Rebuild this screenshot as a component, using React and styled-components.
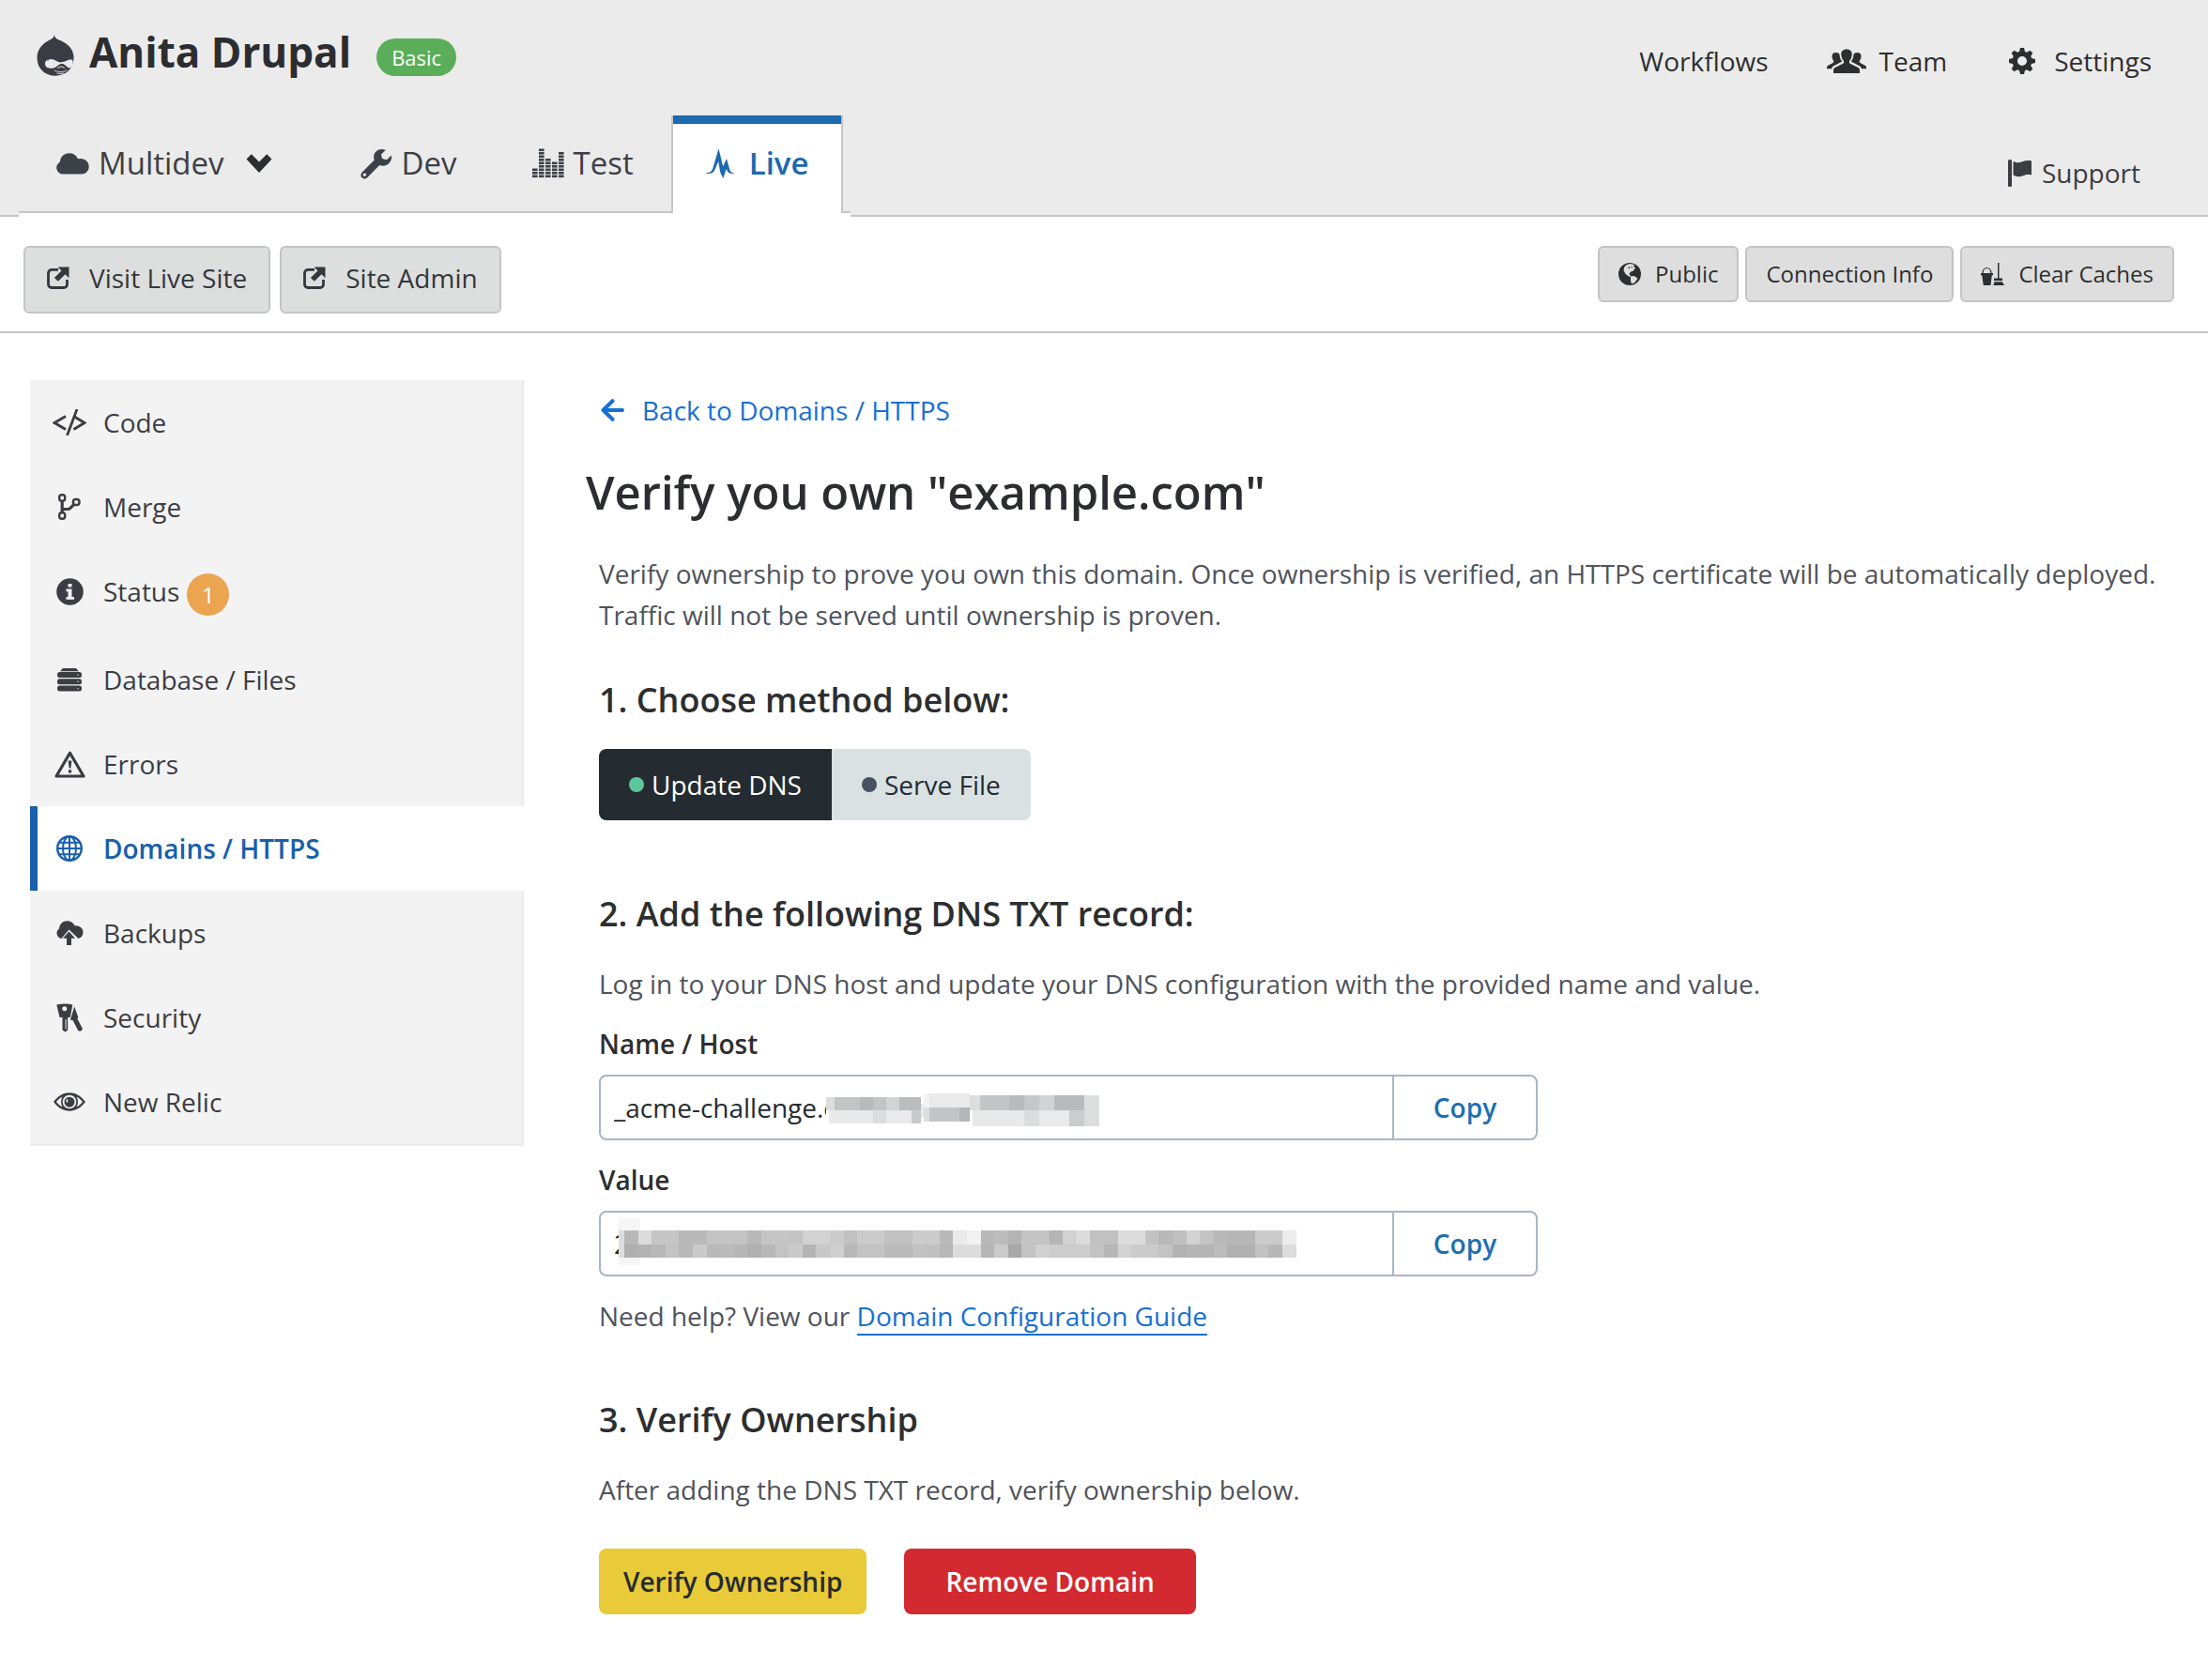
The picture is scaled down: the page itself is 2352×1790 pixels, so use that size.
import React, { useState } from "react";
import styled, { createGlobalStyle, css } from "styled-components";

const GlobalStyle = createGlobalStyle`
  *, *::before, *::after { box-sizing: border-box; }
  body {
    margin: 0;
    background: #fff;
    color: #2d2e2f;
    font-family: "Open Sans", "Noto Sans", sans-serif;
    font-size: 28px;
    line-height: 44px;
  }
  button, input { font: inherit; color: inherit; margin: 0; }
  button { cursor: pointer; }
  svg { display: block; flex: none; }
  h1, h2, p { margin: 0; }
`;

/* ---------- Icons ---------- */

const Svg = ({ w, h, children, ...rest }) => (
  <svg width={w} height={h} viewBox={`0 0 ${w} ${h}`} fill="currentColor" aria-hidden="true" {...rest}>
    {children}
  </svg>
);

const DrupalIcon = () => (
  <Svg w={40} h={44}>
    <path d="M18.700 0c.6 2.600 1.700 4 4.300 5.200C32 8.500 39.500 14 39.500 24.500 39.500 36 31 43.700 20 43.700S.5 36 .5 24.700C.5 15 7 9 14 5.500 17.500 3.800 18.500 2.500 18.700 0z" />
    <path fill="#ebebeb" d="M9 31c0-3.400 2.800-5.200 6.300-5 4 .2 6.200 2.800 9.700 3.400 3.600-.4 6.500-1.600 9.800-3 2.500-.8 3.900.4 3.900 3 0 3-1.400 5.600-3.400 6-2.300.3-4.300-3.100-7.300-4.300-3-.6-4.600 1-7.200 3.100-2.600 1.700-5.300 1.900-7.600 1.400C10.500 35 9 33.500 9 31z" />
    <path fill="none" stroke="#b4b6b8" strokeWidth="1.300" strokeLinecap="round" d="M22.500 35.500c2-1.700 5-1.800 7-.1M19.500 38.200c3 1.800 9 2 12.500-.2M22 41.200c2.500.6 4.500.5 6.500 0" />
    <path fill="#1e78c8" d="M10.500 27.500l2.200-1.800 1.800.3-2.600 1.800zM34.500 26.500l3.200-1.200.5 1.200zM38 23l1.500-1v2z" />
  </Svg>
);

const CloudIcon = () => (
  <Svg w={35} h={23}>
    <path d="M7 22.500a6.800 6.800 0 0 1-4.300-12c.5-.4 1.300-.7 1.300-1.400C4.500 3.600 9 .3 14 .3c3.800 0 7 2 8.500 5.300.3.600.8.700 1.600.6 6-.9 10.600 3 10.600 8.300 0 4.600-3.400 8-8 8z" />
  </Svg>
);

const ChevronIcon = () => (
  <Svg w={28} h={20}>
    <path d="M14 20L.5 5.500 5.800.3 14 8.600 22.200.3l5.300 5.200z" />
  </Svg>
);

const WrenchIcon = () => (
  <Svg w={34} h={33}>
    <path d="M33 7.500l-5 4.700-5-1.300-1-4.400L26.800 2C23 .2 18.500.8 16 4c-2 2.600-2.300 5.300-1.300 8.500L2 25.200c-2.200 2.300-2 4.600-.5 6.100 1.500 1.600 4.200 1.600 6.200-.6L20.300 18c3.700 1.200 7.300.8 10-1.900 2.500-2.500 3.200-5.500 2.700-8.600zM5.700 29.300a1.700 1.700 0 1 1-2.400-2.400 1.700 1.700 0 0 1 2.400 2.400z" />
  </Svg>
);

const BAR_LEVELS = [3, 9, 6, 5, 8];
const BarsIcon = () => (
  <Svg w={34} h={32}>
    {BAR_LEVELS.map((count, col) =>
      Array.from({ length: count }, (_, n) => (
        <rect key={`${col}-${n}`} x={col * 7} y={32 - 3.5 * (n + 1)} width="5.600" height="2.600" />
      ))
    )}
  </Svg>
);

const PulseIcon = () => (
  <Svg w={33} h={32}>
    <path d="M0 26.500c5-.3 7-1.500 8.300-5L14.500.3l4.700 19L23 11l3.500 12.500c.8 2 2.500 2.800 6 3-4.700 1-7.300.4-8.700-2.300l-1-2.300L19.300 32l-3.100-6.500-2-11.500-4 9.500C8.300 27 5 27.800 0 26.500z" />
  </Svg>
);

const TeamIcon = () => (
  <Svg w={42} h={26} viewBox="0 0 42 30" preserveAspectRatio="none">
    <path d="M21 .5c3.800 0 6 2.500 5.700 7-.2 3-1.200 5.500-2.400 7-.6.8-.5 3.200.5 3.800l8 4.400c1.500.9 2.200 2 2.200 3.800v3.500H7v-3.500c0-1.800.7-2.900 2.200-3.800l8-4.400c1-.6 1.100-3 .5-3.800-1.200-1.500-2.200-4-2.400-7C15 3 17.200.5 21 .5z" />
    <path d="M9.500 4.500c2.300 0 3.500.9 4 2.500.2 3.800 1 6.500 2.800 8.700l-8.600 5C6 21.800 5.300 22.500 5.200 24.500H0V23c0-1.500.5-2.200 1.800-2.900l4.700-2.800c1-.7 1-2.200.5-3-1-1.300-1.500-3-1.500-5.300 0-3 1.400-4.500 4-4.500zM32.500 4.500c-2.300 0-3.500.9-4 2.500-.2 3.800-1 6.500-2.800 8.700l8.600 5c1.700 1.100 2.400 1.800 2.500 3.800H42V23c0-1.500-.5-2.200-1.800-2.900l-4.700-2.800c-1-.7-1-2.200-.5-3 1-1.300 1.500-3 1.500-5.300 0-3-1.400-4.500-4-4.500z" />
  </Svg>
);

const GearIcon = () => (
  <Svg w={28} h={28}>
    <g>
      {[0, 45, 90, 135, 180, 225, 270, 315].map((angle) => (
        <path key={angle} d="M10.800 5L12 0h4l1.200 5z" transform={`rotate(${angle} 14 14)`} />
      ))}
    </g>
    <path fillRule="evenodd" d="M14 3.500a10.500 10.500 0 1 1 0 21 10.500 10.500 0 0 1 0-21zm0 5.500a5 5 0 1 0 0 10 5 5 0 0 0 0-10z" />
  </Svg>
);

const FlagIcon = () => (
  <Svg w={26} h={29}>
    <rect x="0" y="0" width="4" height="29" rx="1.500" />
    <path d="M5.500 2c5.500 2.500 8 .8 11-.2 3-1 6-.8 8.500-.3v15c-3.500-1-6-.4-9 .8-3.500 1.200-7 1.300-10.500-.8z" />
  </Svg>
);

const ExternalIcon = () => (
  <Svg w={24} h={24}>
    <path fill="none" stroke="currentColor" strokeWidth="2.800" d="M12 3.400H5A3.500 3.500 0 0 0 1.500 7v12A3.500 3.500 0 0 0 5 22.500h13a3.500 3.500 0 0 0 3.500-3.500v-5" />
    <path d="M11.500.5h12v11.700l-4-3.900-7.600 7.500-4-3.900 7.600-7.400z" />
  </Svg>
);

const EarthIcon = () => (
  <Svg w={24} h={24}>
    <circle cx="12" cy="12" r="12" />
    <path fill="#dedede" d="M8 2.500l4-1.500 5 1-1 2 2 1-2 3.500-3.500 1.500-1 2.500 2 2-1.500.5-4-2.500-2.500-4 .5-3.500zM13 14.500l3.500-.5 4 2.500-3 4.500-3.500 1.500-1-3.500z" />
    <path d="M10.500 4.500h1.500v1.500h-1.500zM13.500 4h1.200v1.200h-1.200z" />
  </Svg>
);

const CleanIcon = () => (
  <Svg w={25} h={24}>
    <path fill="none" stroke="currentColor" strokeWidth="1.200" d="M2 11.500C2 3.500 11 3.500 11 11.500" />
    <path d="M0 11h13v2.200h-1.200L10.500 24H2.800L1.200 13.200H0zM18 0h1.500v16.500H23V19h-9v-2.500h4zM14.500 20.200h8.300L25 24H13.300z" />
  </Svg>
);

const ArrowLeftIcon = () => (
  <Svg w={25} h={24} fill="none" stroke="currentColor" strokeWidth="4" strokeLinecap="round" strokeLinejoin="round">
    <path d="M12.500 2.200L2.500 12l10 9.800M3.500 12H23" />
  </Svg>
);

const CodeIcon = () => (
  <Svg w={36} h={28} fill="none" stroke="currentColor" strokeWidth="2.800">
    <path d="M14 7.500L2 14.500l12 7M22.500 7.500L34 14.500l-11.500 7M26 0L15.500 28" />
  </Svg>
);

const MergeIcon = () => (
  <Svg w={24} h={28} fill="none" stroke="currentColor" strokeWidth="2.400">
    <rect x="1.200" y="1.200" width="6" height="6.500" rx="2.500" />
    <rect x="1.200" y="20.300" width="6" height="6.500" rx="2.500" />
    <rect x="16" y="6" width="6.500" height="6" rx="2.500" />
    <path strokeWidth="3.200" d="M4.200 8v12M4.200 16.500h6.500c2.500 0 3-3 6.300-4.800" />
  </Svg>
);

const InfoIcon = () => (
  <Svg w={29} h={29}>
    <circle cx="14.500" cy="14.500" r="14.300" />
    <path fill="#f3f3f3" d="M12.500 6h4v3.500h-4zM10.500 11.500h6v8.500h2.500v2.700h-8.500V20h2v-5.700h-2z" />
  </Svg>
);

const DatabaseIcon = () => (
  <Svg w={26} h={26}>
    <path d="M6 1h14l3 3.300H3z" />
    <rect y="5" width="26" height="6" rx="2.500" />
    <rect y="12.300" width="26" height="6" rx="2.500" />
    <rect y="19.600" width="26" height="6" rx="2.500" />
    <path fill="#f3f3f3" d="M21.500 7.300h1v1.400h-1zM21.500 14.600h1V16h-1zM21.500 21.900h1v1.400h-1z" />
  </Svg>
);

const WarningIcon = () => (
  <Svg w={33} h={29}>
    <path fill="none" stroke="currentColor" strokeWidth="3.200" strokeLinejoin="round" d="M16.500 2.300L31 27H2z" />
    <path d="M14.600 10.500h3.800l-1 8h-1.800zM14.900 20.300h3.200v3.200h-3.200z" />
  </Svg>
);

const GlobeIcon = () => (
  <Svg w={28} h={28} fill="none" stroke="currentColor" strokeWidth="2">
    <circle cx="14" cy="14" r="12.800" strokeWidth="2.400" />
    <ellipse cx="14" cy="14" rx="7" ry="12.800" />
    <path d="M14 1v26M1 14h26M3 7.800h22M3 20.200h22" />
  </Svg>
);

const BackupIcon = () => (
  <Svg w={30} h={26}>
    <path d="M6.500 19A5.800 5.800 0 0 1 4 8.500C4.300 3.500 8 .3 12.500.3c3.500 0 6.500 1.800 8 5 5-.5 9 2.500 9 7 0 3.500-2 6-5 6.700L14.500 9.500z" />
    <path d="M14.500 11.500l6.500 7.300h-4V26h-5v-7.200H8z" />
  </Svg>
);

const KeysIcon = () => (
  <Svg w={29} h={31}>
    <path fillRule="evenodd" d="M.3 1.500C6 .2 12 .2 17.300 1.500L14.800 15h-2.600v13.500L9.500 30.500 6.500 28.500V15H3.500zM8.800 3.200a2.500 2.500 0 1 0 0 5 2.500 2.500 0 0 0 0-5z" />
    <path d="M19.300 3.500l4 11.500-1 1.300 5.700 11-1.500 2.200h-3L17.500 18l-2.700-.2z" />
    <path fill="#f3f3f3" d="M9.600 17h1v10.500h-1z" />
  </Svg>
);

const EyeIcon = () => (
  <Svg w={34} h={20}>
    <path fillRule="evenodd" d="M0 10C5 3.500 10.500.3 17 .3S29 3.500 34 10C29 16.500 23.500 19.700 17 19.700S5 16.500 0 10zM9.500 4.500C6.500 6 4.700 7.800 3 10c1.700 2.200 3.500 4 6.500 5.500-2-3.500-2-7.500 0-11zM24.500 4.500c2 3.500 2 7.500 0 11 3-1.500 4.800-3.300 6.500-5.500-1.700-2.200-3.500-4-6.500-5.500zM17 2.700a7.300 7.300 0 1 0 0 14.600 7.300 7.300 0 0 0 0-14.600z" />
    <path d="M17 4.700a5.500 5.500 0 1 1 0 11 5.500 5.500 0 0 1 0-11z" />
    <path fill="#f3f3f3" d="M13.300 9.500c.2-1.500 1-2.500 2-2.800-.3 1.500-.3 2.500.3 3.800-1 .2-2 0-2.300-1z" />
  </Svg>
);

/* ---------- Header ---------- */

const Header = styled.header`
  display: flex;
  justify-content: space-between;
  background: #ebebeb;
  border-bottom: 2px solid #c4c4c4;
`;

const HeaderStart = styled.div`
  display: flex;
  flex-direction: column;
  padding-bottom: 2px;
`;

const Brand = styled.div`
  display: flex;
  align-items: flex-end;
  padding: 29px 39px 42px;
  color: #393c42;
`;

const SiteName = styled.h1`
  margin-left: 16px;
  color: #2c2d31;
  font-size: 44px;
  font-weight: 700;
  line-height: 52px;
`;

const PlanBadge = styled.span`
  margin-left: 27px;
  padding: 0 16px;
  border-radius: 20px;
  background: #5aae5a;
  color: #fff;
  font-size: 22px;
  line-height: 40px;
`;

const TabBar = styled.nav`
  display: flex;
  height: 104px;
  margin-left: 20px;
  padding-right: 8px;
  border-bottom: 2px solid #c6c6c6;
  box-shadow: 0 4px 0 #fff;
`;

const Tab = styled.a`
  display: flex;
  align-items: center;
  gap: 10px;
  padding: 0 40px;
  color: #3c4047;
  font-size: 33px;
  text-decoration: none;
  ${(p) => p.$menu && css`padding-right: 54px;`}
  ${(p) =>
    p.$active &&
    css`
      gap: 14px;
      margin-bottom: -2px;
      padding: 0 34px 2px;
      border: solid #c6c6c6;
      border-width: 0 2px;
      background: #fff linear-gradient(#1b69ae, #1b69ae) 0 0 / 100% 9px no-repeat;
      background-origin: border-box;
      color: #1b69ae;
      font-weight: 600;
    `}
`;

const MenuArrow = styled.span`
  margin-left: 13px;
  color: #2c2d31;
`;

const HeaderEnd = styled.div`
  display: flex;
  flex-direction: column;
  align-items: flex-end;
  gap: 75px;
  padding: 43px 60px 0 0;
`;

const UserNav = styled.nav`
  display: flex;
  gap: 62px;
`;

const HeaderLink = styled.a`
  display: flex;
  align-items: center;
  gap: ${(p) => p.$gap || 14}px;
  color: #2d2e2f;
  text-decoration: none;
`;

const SupportLink = styled(HeaderLink)`
  margin-right: 12px;
  color: #3c3d43;
`;

const IconSlot = styled.span`
  display: flex;
  align-items: center;
  justify-content: center;
  width: 36px;
  height: 44px;
`;

/* ---------- Toolbar ---------- */

const Toolbar = styled.div`
  display: flex;
  justify-content: space-between;
  align-items: flex-start;
  padding: 31px 36px 19px 25px;
  border-bottom: 2px solid #c4c4c4;
`;

const ButtonRow = styled.div`
  display: flex;
  gap: ${(p) => p.$gap}px;
`;

const ToolButton = styled.button`
  display: flex;
  align-items: center;
  gap: 15px;
  height: 60px;
  padding: 0 20px;
  border: 2px solid #c4c4c4;
  border-radius: 6px;
  background: #dedede;
  color: #2d2e2f;
  font-size: 24px;
  ${(p) =>
    p.$large &&
    css`
      gap: 21px;
      height: 72px;
      padding: 0 23px 4px;
      background: #dddfde;
      color: #34373c;
      font-size: 28px;
    `}
`;

/* ---------- Body ---------- */

const Body = styled.div`
  display: flex;
  align-items: flex-start;
  gap: 80px;
  padding: 50px 32px 70px;
`;

const Sidebar = styled.nav`
  flex: none;
  width: 526px;
  border-bottom: 2px solid #ebebeb;
`;

const SideItem = styled.a`
  display: flex;
  align-items: flex-start;
  gap: 18px;
  padding: 23px 24px;
  border-right: 2px solid #ebebeb;
  background: #f3f3f3;
  color: #3c3d43;
  text-decoration: none;
  ${(p) =>
    p.$active &&
    css`
      padding-left: 16px;
      border-left: 8px solid #1860ab;
      border-right-color: #fff;
      background: #fff;
      color: #1860ab;
      font-weight: 600;
    `}
`;

const SideLabel = styled.span`
  display: flex;
  align-items: flex-start;
  gap: 8px;
`;

const CountBadge = styled.span`
  width: 45px;
  margin-top: 3px;
  border-radius: 50%;
  background: #eba450;
  color: #fff;
  font-size: 24px;
  line-height: 45px;
  text-align: center;
`;

const Main = styled.main`
  flex: 1;
  min-width: 0;
  padding-top: 10px;
`;

const BackLink = styled.a`
  display: inline-flex;
  align-items: center;
  gap: 19px;
  padding-left: 2px;
  color: #1770d2;
  text-decoration: none;
  vertical-align: top;
`;

const PageTitle = styled.h2`
  margin: 33px 0 33px -14px;
  color: #2c2d31;
  font-size: 49px;
  font-weight: 600;
  line-height: 64px;
`;

const Text = styled.p`
  color: #4f535b;
`;

const Section = styled.section`
  margin-top: ${(p) => p.$top}px;
`;

const StepTitle = styled.h2`
  margin-bottom: 28px;
  font-size: 36px;
  font-weight: 600;
  line-height: 48px;
`;

const Toggle = styled.div`
  display: inline-flex;
  overflow: hidden;
  border-radius: 8px;
  vertical-align: top;
`;

const ToggleButton = styled.button`
  display: flex;
  align-items: center;
  gap: 8px;
  height: 76px;
  padding: 0 32px;
  border: 0;
  background: ${(p) => (p.$on ? "#242b31" : "#d9e1e3")};
  color: ${(p) => (p.$on ? "#fff" : "#242b31")};
`;

const Dot = styled.span`
  width: 16px;
  height: 16px;
  border-radius: 50%;
  background: ${(p) => (p.$on ? "#5bc79b" : "#475263")};
`;

const Field = styled.div`
  margin-top: 20px;
`;

const FieldLabel = styled.label`
  display: block;
  margin-bottom: 11px;
  color: #2d2e2f;
  font-weight: 600;
`;

const FieldBox = styled.div`
  display: flex;
  max-width: 1000px;
  height: 70px;
  border: 2px solid #a7b6c5;
  border-radius: 8px;
`;

const InputWrap = styled.div`
  position: relative;
  flex: 1;
`;

const FieldInput = styled.input`
  width: 100%;
  height: 100%;
  padding: 0 14px;
  border: 0;
  background: transparent;
  color: #242b31;
  outline: none;
`;

const Redaction = styled.svg`
  position: absolute;
  top: ${(p) => p.$top}px;
  left: ${(p) => p.$left}px;
`;

const CopyButton = styled.button`
  width: 153px;
  padding: 0;
  border: 0;
  border-left: 2px solid #a7b6c5;
  background: transparent;
  color: #1d6fb1;
  font-weight: 600;
`;

const HelpText = styled(Text)`
  margin-top: 20px;
`;

const GuideLink = styled.a`
  border-bottom: 2px solid #1770d2;
  color: #1770d2;
  text-decoration: none;
`;

const Actions = styled.div`
  display: flex;
  gap: 40px;
  margin-top: 41px;
`;

const ActionButton = styled.button`
  height: 70px;
  padding: 0 ${(p) => (p.$danger ? 44 : 26)}px;
  border: 0;
  border-radius: 8px;
  background: ${(p) => (p.$danger ? "#d22a30" : "#e9ca38")};
  color: ${(p) => (p.$danger ? "#fff" : "#242b31")};
  font-weight: 600;
`;

/* ---------- Masked values ---------- */

/* Each entry: x, y, right, bottom, colour */
const HOST_BLOCKS = [
  [0, 5, 9, 19, "#dcdedd"], [9, 5, 36, 19, "#c3c4c6"], [36, 5, 50, 19, "#b9babc"], [50, 5, 64, 19, "#c3c4c6"],
  [64, 5, 78, 19, "#d2d3d5"], [78, 5, 101, 19, "#bbbcbe"], [3, 19, 50, 33, "#e9e9e9"], [50, 19, 64, 33, "#dcdedd"],
  [64, 19, 91, 33, "#eaeaea"], [91, 19, 101, 33, "#c8c9cb"], [101, 12, 104, 27, "#e9e9e9"],
  [104, 1, 110, 16, "#f3f3f5"], [110, 1, 153, 16, "#eaeaea"], [104, 16, 110, 31, "#dcdedd"],
  [110, 16, 142, 31, "#c3c4c6"], [142, 16, 153, 31, "#b5b6b8"],
  [153, 3, 164, 19, "#dcdedd"], [164, 3, 195, 19, "#c3c4c6"], [195, 3, 211, 19, "#b9babc"], [211, 3, 227, 19, "#c6c7c9"],
  [227, 3, 243, 19, "#d2d3d5"], [243, 3, 275, 19, "#b9babc"], [275, 3, 291, 19, "#dcdedd"],
  [156, 19, 211, 36, "#e9e9e9"], [211, 19, 227, 36, "#dcdedd"], [227, 19, 259, 36, "#eaeaea"],
  [259, 19, 275, 36, "#cbccce"], [275, 19, 291, 36, "#dcdedd"],
];

const VALUE_ROWS = [
  "b8 dc c6 c6 b9 b9 c3 c3 c3 b8 c5 c5 c4 d2 d2 cb c1 cb cb c1 c1 cb cb b9 ea f2 b8 bc b4 c3 c3 b5 d2 dc c1 c1 dc dc c2 b8 bf d2 c3 b8 b7 b7 cb cb ec",
  "b0 b3 b8 c3 b9 ca b9 bb b6 b0 b7 c3 ca b5 c8 cf b8 c3 c3 bb bb c2 c0 b8 dc dc b6 ca a8 c3 d0 cc cc cc c3 b7 d2 cb cb c3 b3 b5 b5 bc b0 b0 c1 b7 dc",
].map((row) => row.split(" "));
const CELL = 14.6;

const HostMask = () => (
  <Redaction $left={240} $top={17} width="292" height="36" shapeRendering="crispEdges" aria-hidden="true">
    <rect y="5" width="101" height="28" fill="#fff" />
    {HOST_BLOCKS.map(([x, y, r, b, fill]) => (
      <rect key={`${x}-${y}`} x={x} y={y} width={r - x} height={b - y} fill={fill} />
    ))}
  </Redaction>
);

const ValueMask = () => (
  <Redaction $left={19} $top={6} width="722" height="50" shapeRendering="crispEdges" aria-hidden="true">
    <rect width="23" height="50" fill="#f6f6f6" />
    <rect y="13" width="6" height="29" fill="#dcdedd" />
    {VALUE_ROWS.map((row, r) =>
      row.map((shade, c) => (
        <rect key={`${r}-${c}`} x={6 + c * CELL} y={13 + r * 15} width={CELL + 0.4} height={15 - r} fill={`#${shade}${shade}${shade}`} />
      ))
    )}
  </Redaction>
);

/* ---------- Page ---------- */

const SIDE_LINKS = [
  { label: "Code", Icon: CodeIcon },
  { label: "Merge", Icon: MergeIcon },
  { label: "Status", Icon: InfoIcon, count: 1 },
  { label: "Database / Files", Icon: DatabaseIcon },
  { label: "Errors", Icon: WarningIcon },
  { label: "Domains / HTTPS", Icon: GlobeIcon, active: true },
  { label: "Backups", Icon: BackupIcon },
  { label: "Security", Icon: KeysIcon },
  { label: "New Relic", Icon: EyeIcon },
];

const METHODS = ["Update DNS", "Serve File"];

const CopyField = ({ id, label, value, mask }) => (
  <Field>
    <FieldLabel htmlFor={id}>{label}</FieldLabel>
    <FieldBox>
      <InputWrap>
        <FieldInput id={id} type="text" readOnly value={value} />
        {mask}
      </InputWrap>
      <CopyButton type="button">Copy</CopyButton>
    </FieldBox>
  </Field>
);

export default function App() {
  const [method, setMethod] = useState(METHODS[0]);

  return (
    <>
      <GlobalStyle />
      <Header>
        <HeaderStart>
          <Brand>
            <DrupalIcon />
            <SiteName>Anita Drupal</SiteName>
            <PlanBadge>Basic</PlanBadge>
          </Brand>
          <TabBar>
            <Tab href="#multidev" $menu>
              <CloudIcon />
              Multidev
              <MenuArrow><ChevronIcon /></MenuArrow>
            </Tab>
            <Tab href="#dev"><WrenchIcon />Dev</Tab>
            <Tab href="#test"><BarsIcon />Test</Tab>
            <Tab href="#live" $active aria-current="page"><PulseIcon />Live</Tab>
          </TabBar>
        </HeaderStart>
        <HeaderEnd>
          <UserNav>
            <HeaderLink href="#workflows">Workflows</HeaderLink>
            <HeaderLink href="#team"><TeamIcon />Team</HeaderLink>
            <HeaderLink href="#settings" $gap={16}><IconSlot><GearIcon /></IconSlot>Settings</HeaderLink>
          </UserNav>
          <SupportLink href="#support" $gap={10}><FlagIcon />Support</SupportLink>
        </HeaderEnd>
      </Header>

      <Toolbar>
        <ButtonRow $gap={10}>
          <ToolButton type="button" $large><ExternalIcon />Visit Live Site</ToolButton>
          <ToolButton type="button" $large><ExternalIcon />Site Admin</ToolButton>
        </ButtonRow>
        <ButtonRow $gap={7}>
          <ToolButton type="button"><EarthIcon />Public</ToolButton>
          <ToolButton type="button">Connection Info</ToolButton>
          <ToolButton type="button"><CleanIcon />Clear Caches</ToolButton>
        </ButtonRow>
      </Toolbar>

      <Body>
        <Sidebar>
          {SIDE_LINKS.map(({ label, Icon, count, active }) => (
            <SideItem key={label} href="#" $active={active} aria-current={active ? "page" : undefined}>
              <IconSlot><Icon /></IconSlot>
              <SideLabel>
                {label}
                {count && <CountBadge>{count}</CountBadge>}
              </SideLabel>
            </SideItem>
          ))}
        </Sidebar>

        <Main>
          <BackLink href="#domains"><ArrowLeftIcon />Back to Domains / HTTPS</BackLink>
          <PageTitle>Verify you own "example.com"</PageTitle>
          <Text>
            Verify ownership to prove you own this domain. Once ownership is verified, an HTTPS certificate will be
            automatically deployed. Traffic will not be served until ownership is proven.
          </Text>

          <Section $top={45}>
            <StepTitle>1. Choose method below:</StepTitle>
            <Toggle>
              {METHODS.map((name) => (
                <ToggleButton
                  key={name}
                  type="button"
                  $on={name === method}
                  aria-pressed={name === method}
                  onClick={() => setMethod(name)}
                >
                  <Dot $on={name === method} />
                  {name}
                </ToggleButton>
              ))}
            </Toggle>
          </Section>

          <Section $top={76}>
            <StepTitle>2. Add the following DNS TXT record:</StepTitle>
            <Text>Log in to your DNS host and update your DNS configuration with the provided name and value.</Text>
            <CopyField id="dns-host" label="Name / Host" value="_acme-challenge.e" mask={<HostMask />} />
            <CopyField id="dns-value" label="Value" value="2" mask={<ValueMask />} />
            <HelpText>
              Need help? View our <GuideLink href="#guide">Domain Configuration Guide</GuideLink>
            </HelpText>
          </Section>

          <Section $top={65}>
            <StepTitle>3. Verify Ownership</StepTitle>
            <Text>After adding the DNS TXT record, verify ownership below.</Text>
            <Actions>
              <ActionButton type="button">Verify Ownership</ActionButton>
              <ActionButton type="button" $danger>Remove Domain</ActionButton>
            </Actions>
          </Section>
        </Main>
      </Body>
    </>
  );
}
